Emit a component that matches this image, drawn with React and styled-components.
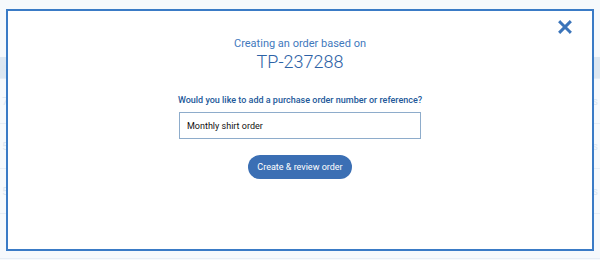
import React from "react";
import styled, { createGlobalStyle } from "styled-components";

const Global = createGlobalStyle`
  html, body { margin: 0; padding: 0; }
  body {
    width: 600px;
    height: 260px;
    overflow: hidden;
    background: #f6f9fc;
    font-family: Roboto, "Liberation Sans", sans-serif;
  }
`;

const Page = styled.div`
  position: relative;
  width: 600px;
  height: 260px;
  overflow: hidden;
`;

const Table = styled.div`
  display: flex;
  flex-direction: column;
  padding-top: 57px;
`;

const Row = styled.div`
  height: ${(p) => p.h}px;
  background: ${(p) => (p.head ? "#dde7f1" : "transparent")};
  border-bottom: 1px solid #e6edf5;
  display: flex;
  justify-content: space-between;
  align-items: center;
  padding: 0 2px;
  font-size: 11px;
  color: #dbe6f0;
`;

const Overlay = styled.div`
  position: absolute;
  left: 6px;
  top: 9px;
  width: 588px;
  height: 242px;
  box-sizing: border-box;
  border: 2px solid #3a7bc6;
  background: #fff;
  display: flex;
  flex-direction: column;
  align-items: center;
  padding-top: 26px;
`;

const Close = styled.button`
  position: absolute;
  right: 20px;
  top: 9px;
  border: 0;
  background: none;
  padding: 0;
  width: 14px;
  height: 14px;
  cursor: pointer;
  display: flex;
`;

const Subtitle = styled.div`
  font-size: 11px;
  color: #3f79bd;
  line-height: 14px;
`;

const Title = styled.div`
  font-size: 18px;
  font-weight: 300;
  color: #2d62a6;
  line-height: 22px;
`;

const Question = styled.div`
  margin-top: 21px;
  font-size: 9px;
  font-weight: 500;
  color: #23599a;
  line-height: 12px;
`;

const Input = styled.input`
  margin-top: 6px;
  width: 242px;
  height: 27px;
  box-sizing: border-box;
  border: 1px solid #8eaccb;
  padding: 0 7px;
  font-family: inherit;
  font-size: 9px;
  color: #111;
  outline: none;
`;

const Button = styled.button`
  margin-top: 16px;
  width: 104px;
  height: 24px;
  border: 0;
  border-radius: 12px;
  background: #3b6fb4;
  color: #fff;
  font-family: inherit;
  font-size: 9px;
  white-space: nowrap;
  padding: 0;
  cursor: pointer;
`;

export default function App() {
  const rows = [
    { h: 21, head: true, l: "efe", r: "" },
    { h: 44, l: "7", r: "us" },
    { h: 44, l: "5", r: "us" },
    { h: 44, l: "5", r: "us" },
    { h: 44, l: "", r: "" },
  ];
  return (
    <Page>
      <Global />
      <Table>
        {rows.map((r, i) => (
          <Row key={i} h={r.h} head={r.head}>
            <span>{r.l}</span>
            <span>{r.r}</span>
          </Row>
        ))}
      </Table>
      <Overlay>
        <Close aria-label="Close">
          <svg width="14" height="14" viewBox="0 0 14 14">
            <path
              d="M2.2 2.2 L11.8 11.8 M11.8 2.2 L2.2 11.8"
              stroke="#3a74ba"
              strokeWidth="3"
              strokeLinecap="square"
            />
          </svg>
        </Close>
        <Subtitle>Creating an order based on</Subtitle>
        <Title>TP-237288</Title>
        <Question>Would you like to add a purchase order number or reference?</Question>
        <Input defaultValue="Monthly shirt order" />
        <Button>Create &amp; review order</Button>
      </Overlay>
    </Page>
  );
}
